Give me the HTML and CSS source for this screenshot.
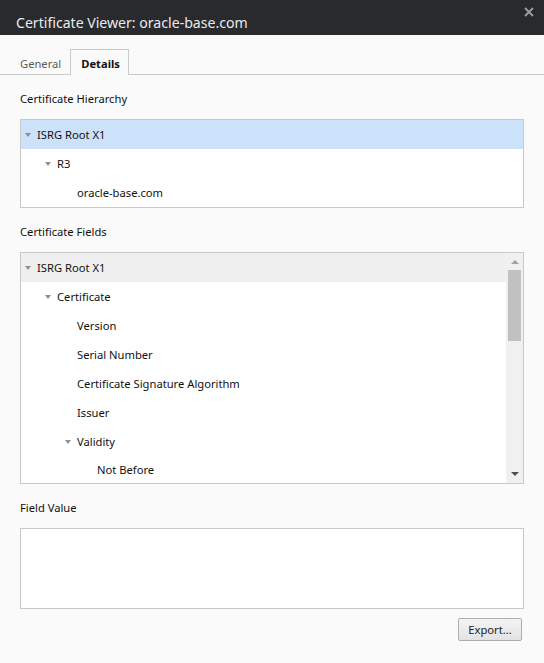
FILE: index.html
```html
<!DOCTYPE html>
<html>
<head>
<meta charset="utf-8">
<link rel="stylesheet" href="styles.css">
</head>
<body>
<div class="dialog">
  <div class="titlebar">
    <span class="title">Certificate Viewer: oracle-base.com</span>
    <svg class="close" width="10" height="10" viewBox="0 0 10 10"><path d="M1 1L9 9M9 1L1 9" stroke="#9aa0a6" stroke-width="1.8"/></svg>
  </div>
  <div class="tabs">
    <div class="tab">General</div>
    <div class="tab active">Details</div>
  </div>
  <div class="content">
    <div class="label first">Certificate Hierarchy</div>
    <div class="box hierarchy">
      <div class="row lvl0 selected"><span class="twisty"></span>ISRG Root X1</div>
      <div class="row lvl1"><span class="twisty"></span>R3</div>
      <div class="row lvl2"><span class="spacer"></span>oracle-base.com</div>
    </div>
    <div class="label">Certificate Fields</div>
    <div class="box fields">
      <div class="tree">
        <div class="row lvl0 hover"><span class="twisty"></span>ISRG Root X1</div>
        <div class="row lvl1"><span class="twisty"></span>Certificate</div>
        <div class="row lvl2"><span class="spacer"></span>Version</div>
        <div class="row lvl2"><span class="spacer"></span>Serial Number</div>
        <div class="row lvl2"><span class="spacer"></span>Certificate Signature Algorithm</div>
        <div class="row lvl2"><span class="spacer"></span>Issuer</div>
        <div class="row lvl2"><span class="twisty"></span>Validity</div>
        <div class="row lvl3 last"><span class="spacer"></span>Not Before</div>
      </div>
      <div class="scrollbar">
        <span class="arrow up"></span>
        <div class="track"><div class="thumb"></div></div>
        <span class="arrow down"></span>
      </div>
    </div>
    <div class="label">Field Value</div>
    <div class="box value"></div>
    <div class="actions">
      <button class="btn">Export...</button>
    </div>
  </div>
</div>
</body>
</html>
```

FILE: styles.css
```css
html, body {
  margin: 0;
  padding: 0;
  background: #fafafa;
}
body {
  font-family: "Noto Sans", "Open Sans", sans-serif;
  font-size: 11.2px;
  color: #111;
}
.dialog {
  width: 544px;
  height: 663px;
  overflow: hidden;
}
.titlebar {
  height: 35px;
  background: #292a2d;
  display: flex;
  align-items: flex-end;
  justify-content: space-between;
  padding: 0 10px 0 16px;
  box-sizing: border-box;
}
.title {
  color: #e8eaed;
  font-size: 14.1px;
  line-height: 20px;
  padding-bottom: 2px;
}
.close {
  align-self: flex-start;
  margin-top: 7px;
}
.tabs {
  display: flex;
  margin-top: 14px;
  padding-left: 9px;
  border-bottom: 1px solid #cbcbcb;
  height: 25px;
}
.tab {
  padding: 2px 8px 0 10px;
  line-height: 23px;
  color: #5a5a5a;
  height: 25px;
  box-sizing: border-box;
  border: 1px solid transparent;
  border-bottom: none;
}
.tab.active {
  background: #fafafa;
  border-color: #cbcbcb;
  font-weight: bold;
  color: #111;
  height: 26px;
  padding: 2px 8px 0 10px;
}
.content {
  padding: 0 20px;
}
.label {
  line-height: 18px;
  margin-top: 14px;
  margin-bottom: 11px;
  padding-top: 1px;
}
.label.first {
  margin-top: 13px;
  padding-top: 2px;
  margin-bottom: 11px;
}
.box {
  border: 1px solid #c8c8c8;
  background: #fff;
}
.row {
  height: 29px;
  display: flex;
  align-items: center;
  padding-left: 4px;
  white-space: nowrap;
  flex: none;
}
.row.lvl1 { padding-left: 24px; }
.row.lvl2 { padding-left: 44px; }
.row.lvl3 { padding-left: 64px; }
.row.last { height: 27px; }
.row.selected { background: #cce1fa; }
.row.hover { background: #efefef; }
.twisty, .spacer {
  width: 6px;
  margin-right: 6px;
  flex: none;
}
.twisty {
  width: 0;
  height: 0;
  border-left: 3px solid transparent;
  border-right: 3px solid transparent;
  border-top: 4px solid #8f8f8f;
  margin-top: 1px;
}
.fields {
  height: 230px;
  display: flex;
  overflow: hidden;
}
.tree {
  flex: 1;
  overflow: hidden;
}
.scrollbar {
  width: 17px;
  flex: none;
  background: #f0f0f0;
  display: flex;
  flex-direction: column;
  align-items: center;
}
.arrow {
  width: 0;
  height: 0;
  border-left: 4px solid transparent;
  border-right: 4px solid transparent;
}
.arrow.up {
  border-bottom: 4px solid #a3a3a3;
  margin-top: 7px;
}
.arrow.down {
  border-top: 4px solid #505050;
  margin-bottom: 7px;
}
.track {
  flex: 1;
  width: 13px;
  padding-top: 6px;
}
.thumb {
  height: 71px;
  background: #c1c1c1;
}
.value {
  height: 79px;
}
.actions {
  display: flex;
  justify-content: flex-end;
  margin-top: 9px;
  padding-right: 2px;
}
.btn {
  font-family: inherit;
  font-size: 11.2px;
  color: #222;
  width: 64px;
  height: 23px;
  border: 1px solid #adadad;
  border-radius: 2px;
  background: linear-gradient(#f4f4f4, #e3e3e3);
  padding: 0;
}
```
